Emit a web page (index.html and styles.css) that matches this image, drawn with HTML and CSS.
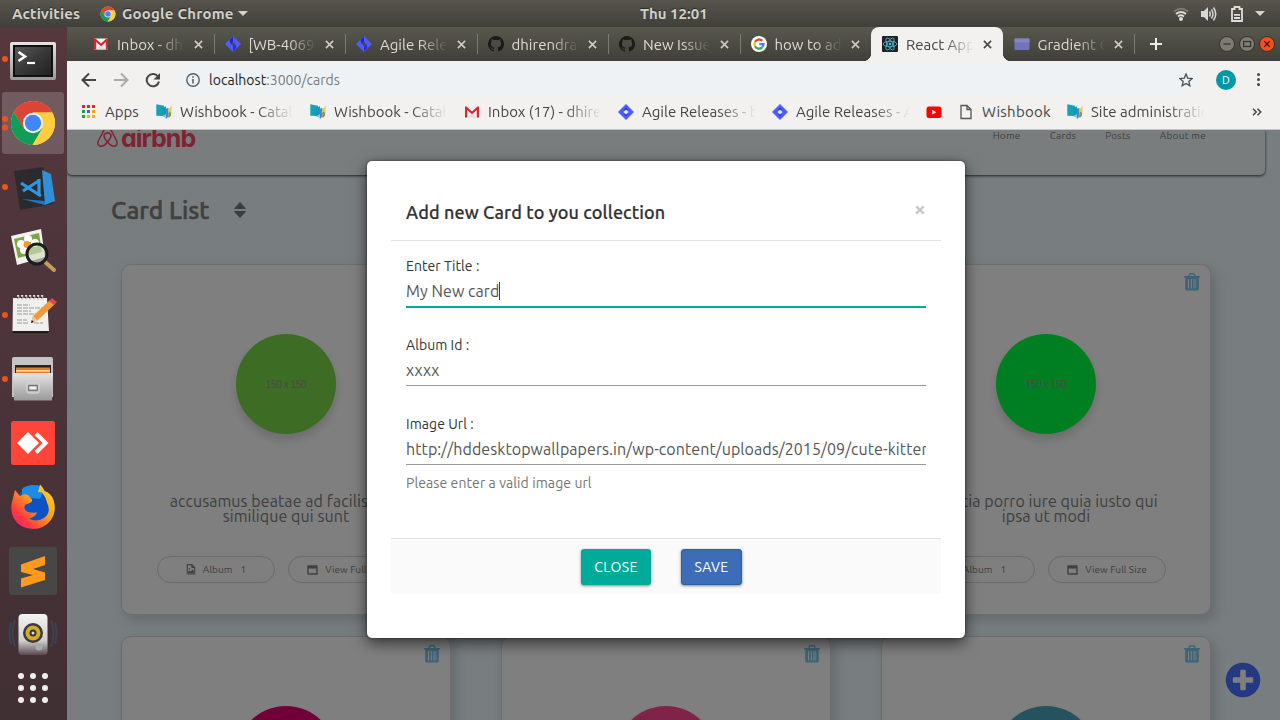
FILE: index.html
```html
<!DOCTYPE html>
<html lang="en">
<head>
<meta charset="utf-8">
<title>React App</title>
<link rel="stylesheet" href="styles.css">
</head>
<body>
<svg width="0" height="0" class="defs">
  <defs>
    <linearGradient id="gSteel" x1="0" y1="0" x2="0" y2="1"><stop offset="0" stop-color="#e4e4e4"/><stop offset="1" stop-color="#9a9a9a"/></linearGradient>
    <linearGradient id="gTerm" x1="0" y1="0" x2="1" y2="1"><stop offset="0" stop-color="#5a5a5a"/><stop offset=".5" stop-color="#383838"/><stop offset="1" stop-color="#222"/></linearGradient>
    <linearGradient id="gFox" x1="1" y1="0" x2="0" y2="1"><stop offset="0" stop-color="#ffe226"/><stop offset=".45" stop-color="#ff9a1e"/><stop offset=".75" stop-color="#ff3a3f"/><stop offset="1" stop-color="#e3178f"/></linearGradient>
    <linearGradient id="gSpk" x1="0" y1="0" x2="0" y2="1"><stop offset="0" stop-color="#f4f4f4"/><stop offset=".65" stop-color="#cfcfcf"/><stop offset="1" stop-color="#5c484e"/></linearGradient>
    <symbol id="chrome" viewBox="0 0 48 48">
      <circle cx="24" cy="24" r="22.5" fill="#ffcd40"/>
      <path d="M4.5 12.8A22.5 22.5 0 0 1 43.7 13.2L24 13.2 14.3 29.6Z" fill="#db4437"/>
      <path d="M4.5 12.8A22.5 22.5 0 0 0 23.5 46.5L33.6 29.4 24 34 14.4 29.4Z" fill="#0f9d58"/>
      <path d="M24 13.2H43.7A22.5 22.5 0 0 1 23.5 46.5L33.6 29.4Z" fill="#ffcd40"/>
      <circle cx="24" cy="24" r="10.4" fill="#f1f1f1"/><circle cx="24" cy="24" r="8.3" fill="#4285f4"/>
    </symbol>
    <symbol id="gmail" viewBox="0 0 16 16"><path d="M1 2.5h14v11H1z" fill="#f3f3f3"/><path d="M3.5 13.5 8 9l4.500 4.500z" fill="#ddd"/><path d="M1 13.500V2.500h1.500L8 7.500l5.500-5H15v11h-2.200V6L8 10.200 3.200 6v7.500z" fill="#d9262e"/></symbol>
    <symbol id="jira" viewBox="0 0 16 16"><path d="M8 0 16 8 8 16 0 8Z" fill="#4c5dff"/><path d="M8 3.800 9.800 5.500 8 8 6 6Z" fill="#2624c8"/><path d="M8 12.200 6.200 10.500 8 8l2 2z" fill="#2c2fd8"/><path d="M8 5.500 10.500 8 8 10.500 5.500 8Z" fill="#e9ebff"/></symbol>
    <symbol id="jiratab" viewBox="0 0 16 16"><path d="M8 0 16 8 8 16 0 8Z" fill="#4c5dff"/><path d="M8 .5v6L5.800 8.200 4.500 4Z" fill="#2624c8"/><path d="M8 15.500v-6l2.200-1.700L11.500 12Z" fill="#2c2fd8"/><path d="M8 5.800 10.200 8 8 10.200 5.800 8Z" fill="#4c4c46"/></symbol>
    <symbol id="github" viewBox="0 0 16 16"><path fill="#1b1b1b" d="M8 0a8 8 0 0 0-2.530 15.590c.4.070.55-.17.55-.38v-1.490c-2.230.49-2.690-.94-2.690-.94-.36-.92-.89-1.170-.89-1.170-.73-.5.050-.49.050-.49.800.06 1.230.83 1.230.83.720 1.220 1.870.87 2.330.66.070-.52.280-.87.510-1.070-1.780-.2-3.640-.89-3.640-3.950 0-.87.310-1.590.82-2.150-.080-.2-.36-1.020.080-2.120 0 0 .67-.21 2.200.82a7.500 7.500 0 0 1 4 0c1.530-1.040 2.200-.82 2.200-.82.440 1.100.16 1.920.080 2.120.510.560.820 1.270.820 2.150 0 3.070-1.870 3.750-3.650 3.950.29.250.540.730.540 1.480v2.190c0 .21.150.46.550.38A8 8 0 0 0 8 0z"/></symbol>
    <symbol id="wish" viewBox="0 0 16 16"><path d="M.3.300 8 1.800v10.200L.3 11.800Z" fill="#12a2ba"/><path d="M6 4 10 2.200v10.500L6 12Z" fill="#1798b4"/><path d="M6.500 12 10 10v4.500z" fill="#8fc7e2"/><path d="M10 4.500 12.500 4v8.500L10 15Z" fill="#3b8fd0"/><path d="M12.500 5.500 15.800 1.500 15.300 10 12.500 12Z" fill="#e8cf4a"/><path d="M12.500 9 14 7.500v5L12.500 14z" fill="#d75b42"/><path d="M13.500 9l1.500-1v4l-1.500 1z" fill="#69b35a"/></symbol>
    <symbol id="close" viewBox="0 0 10 10"><path d="M1 1 9 9M9 1 1 9" stroke="currentColor" stroke-width="1.700" fill="none"/></symbol>
    <symbol id="trash" viewBox="0 0 16 18"><path d="M0 3h4l1-2Q5.500 0 6.500 0h3q1 0 1.500 1l1 2h4v1.600h-1.200V16q0 1.600-1.500 1.600h-10.600Q1.200 17.600 1.200 16V4.600H0zM5.500 3h5l-.7-1.500H6.200zM4 6v9.500h1V6zm2.800 0v9.500h1V6zm2.700 0v9.500h1V6zm2 0v9.500h.7V6z" fill="currentColor" fill-rule="evenodd"/></symbol>
    <symbol id="imgfile" viewBox="0 0 10 12"><path d="M1 .7h5L9 3.700v7.200H1zM6 .7v3h3" fill="none" stroke="currentColor" stroke-width="1.200"/><path d="M2 10V8.200l1.300-1.200 1.200 1.200L6.700 6 8 7.200V10z" fill="currentColor"/><circle cx="3.400" cy="5.200" r=".9" fill="currentColor"/></symbol>
    <symbol id="win" viewBox="0 0 11 10"><path d="M1.200.3h8.600q.9 0 .9.900v7.600q0 .9-.9.900H1.200q-.9 0-.9-.9V1.200q0-.9.900-.9zM1.700 3.400v4.900h7.600V3.400z" fill="currentColor" fill-rule="evenodd"/></symbol>
  </defs>
</svg>

<header class="topbar">
  <div class="top-left"><span class="activities">Activities</span><svg class="i16"><use href="#chrome"/></svg><span class="appname">Google Chrome</span><i class="caret-down"></i></div>
  <div class="clock">Thu 12:01</div>
  <div class="tray">
    <svg width="16" height="16" viewBox="0 0 16 16" fill="none" stroke-linecap="butt"><path d="M1 5.500Q8 0 15 5.500" stroke="#7c7a73" stroke-width="1.800"/><path d="M3 8Q8 4 13 8" stroke="#ddd" stroke-width="1.800"/><path d="M5 10.500Q8 8 11 10.500" stroke="#ddd" stroke-width="1.800"/><circle cx="8" cy="13" r="2" fill="#ddd"/></svg>
    <svg width="16" height="16" viewBox="0 0 16 16" fill="none"><path d="M0 5h3l4-4v14l-4-4H0z" fill="#d8d8d8"/><path d="M8.500 5.500q1.500 2.500 0 5M10.500 3.500q3 4.500 0 9M12.500 1.500q4.500 6.500 0 13" stroke="#d8d8d8" stroke-width="1.500"/></svg>
    <svg width="12" height="16" viewBox="0 0 12 16"><path d="M1 3h2.500V1h5v2H11v12H1z" fill="none" stroke="#ddd" stroke-width="1.800"/><path d="M3 8h6v1.700H3zM3 11h6v2H3z" fill="#ddd"/></svg>
    <i class="caret-down"></i>
  </div>
</header>

<div class="desktop">
  <nav class="dock">
    <div class="dock-item run"><svg viewBox="0 0 67 64"><rect x="10" y="15" width="46" height="38" rx="2" fill="url(#gSteel)"/><rect x="13" y="18" width="40" height="32" fill="#111"/><rect x="15" y="20" width="36" height="28" fill="url(#gTerm)"/><path d="M18.500 25l6.500 4.500-6.500 4.500" stroke="#fff" stroke-width="2.600" fill="none"/><path d="M27 36h8" stroke="#fff" stroke-width="2.200"/></svg></div>
    <div class="dock-item active run2"><svg viewBox="0 0 67 64"><use href="#chrome" x="9.500" y="8.500" width="47" height="47"/></svg></div>
    <div class="dock-item run"><svg viewBox="0 0 67 64"><path d="M14 16 43 12 53 49 20 55Z" fill="#2b2b2e"/><path d="M42 15 51 19 55 46 45 50Z" fill="#2f8fd8"/><path d="M22 44 45 46 45 50 Z" fill="#1c78c4"/><path d="M40 25 23 36M21 28 41 41M39 24v17" stroke="#2f97e2" stroke-width="3.200" fill="none"/></svg></div>
    <div class="dock-item"><svg viewBox="0 0 67 64"><path d="M11 17 41 10 45 38 17 46Z" fill="#f2f2ee"/><path d="M14 20 39 14 42 33 18 39Z" fill="#7da741"/><g fill="#fff"><circle cx="28" cy="20" r="4"/><circle cx="21" cy="25" r="4"/><circle cx="35" cy="24" r="4"/><circle cx="24" cy="31" r="4"/></g><circle cx="27" cy="25.500" r="3.500" fill="#f0a020"/><path d="M45 43 54 51" stroke="#c59a5b" stroke-width="4" stroke-linecap="round"/><circle cx="37" cy="35" r="10" fill="#d3d8c5" fill-opacity=".65" stroke="#1c1c1c" stroke-width="3"/></svg></div>
    <div class="dock-item run"><svg viewBox="0 0 67 64"><g transform="translate(0 -2)"><path d="M13 17h34l2 33H12.500z" fill="#f0f0ee"/><path d="M12.500 50h36v2h-36z" fill="#1b1b1b"/><path d="M17 16.500h28" stroke="#ddd" stroke-width="5" stroke-dasharray="2.200 1.800"/><path d="M17 16.500h28" stroke="#333" stroke-width="1.500" stroke-dasharray="1.500 2.500"/><path d="M17 24h13M17 27h25M17 30h14M17 33h20M17 39h10M17 42h11M34 42h9" stroke="#999" stroke-width="1.200" stroke-dasharray="5 1"/><path d="M31 42 33 35 50 19 55 23 38 39Z" fill="#f29a37"/><path d="M31 42 33 35 37.500 39.500Z" fill="#e8c9a0"/><path d="M31 42l.8-3 2 2z" fill="#111"/><path d="M49 20 52 17 57 21 54 24Z" fill="#e24848"/></g></svg></div>
    <div class="dock-item run"><svg viewBox="0 0 67 64"><path d="M12 12q0-2 2-2h37q2 0 2 2v38H12z" fill="#c4c4c4"/><path d="M15 18h36v9H15z" fill="#2b211c"/><path d="M16 20.500h34v6H16z" fill="#de7a2a"/><path d="M16 23h34v1.800H16z" fill="#f9cf95"/><path d="M13 26h40l-1 27.500H14z" fill="url(#gSteel)"/><rect x="27" y="36" width="12" height="10" rx="1.500" fill="#bbb" stroke="#ddd"/><rect x="28.700" y="38.700" width="8.500" height="4.500" fill="#eee" stroke="#555"/></svg></div>
    <div class="dock-item"><svg viewBox="0 0 67 64"><rect x="11" y="10" width="44" height="44" rx="2.500" fill="#ff4438"/><path d="M28 21 39 32 28 43 17 32Z" fill="#fff"/><path d="M36 22.500 45.500 32 36 41.500" stroke="#fff" stroke-width="4.200" fill="none"/></svg></div>
    <div class="dock-item"><svg viewBox="0 0 67 64"><circle cx="34" cy="30" r="18.500" fill="#0a52c6"/><path d="M22 14q4-4 12-4 7 0 10 5l-4 9-18-2z" fill="#1e8be8"/><path d="M38 17 40 9.500Q43 12 44.500 16 51 18 53.500 25 57 36 51 45 44 54 33 54 20 54 13.500 43 9.500 34 12.500 25l2.500-10 5 6q4-3 8-1l3 3.500 1 .5q1 4-5 5l-2 1q-2 5 3 7 4 1 9 .5-2 5-8 6 7 4 14 0 9-5 4-16-1-5-5-10z" fill="url(#gFox)"/></svg></div>
    <div class="dock-item"><svg viewBox="0 0 67 64"><rect x="9" y="8" width="48" height="48" rx="2.500" fill="#474747"/><path d="M21 25.500 45 17v9L33 30 45 33.500V41L21 48.500v-9L33 36 21 33Z" fill="#ff9a1f"/></svg></div>
    <div class="dock-item"><svg viewBox="0 0 67 64"><path d="M15 17q-5 13 0 27M11 20q-3 10 0 21M51 17q5 13 0 27M55 20q3 10 0 21" stroke="#3b4a62" stroke-width="2" fill="none" opacity=".7"/><path d="M18.500 15q0-4 4-4h21q4 0 4 4v33q0 4-4 4h-21q-4 0-4-4z" fill="url(#gSpk)"/><circle cx="33" cy="30" r="10" fill="#3a3a3a"/><circle cx="33" cy="30" r="7.500" fill="#d1ac2a"/><circle cx="33" cy="30" r="3.500" fill="#333"/><circle cx="33" cy="30" r="1.500" fill="#ddd"/><circle cx="39" cy="44" r="3.500" fill="#aaa"/></svg></div>
    <div class="dock-apps"><i></i><i></i><i></i><i></i><i></i><i></i><i></i><i></i><i></i></div>
  </nav>

  <section class="browser">
    <div class="tabs">
      <div class="tab"><svg class="i16"><use href="#gmail"/></svg><span>Inbox - dhirendra</span><svg class="x"><use href="#close"/></svg></div>
      <div class="tab"><svg class="i16"><use href="#jiratab"/></svg><span>[WB-4069] Bug</span><svg class="x"><use href="#close"/></svg></div>
      <div class="tab"><svg class="i16"><use href="#jiratab"/></svg><span>Agile Releases</span><svg class="x"><use href="#close"/></svg></div>
      <div class="tab"><svg class="i16"><use href="#github"/></svg><span>dhirendrakumar</span><svg class="x"><use href="#close"/></svg></div>
      <div class="tab"><svg class="i16"><use href="#github"/></svg><span>New Issue page</span><svg class="x"><use href="#close"/></svg></div>
      <div class="tab nosep"><svg class="i16" viewBox="0 0 16 16"><circle cx="8" cy="8" r="8" fill="#fff"/><g fill="none" stroke-width="2.300"><path d="M11.300 4.900A4.600 4.600 0 0 0 4 5.800" stroke="#ea4335"/><path d="M4 5.800a4.600 4.600 0 0 0 0 4.400" stroke="#fbbc05"/><path d="M4 10.200a4.600 4.600 0 0 0 7 1.300" stroke="#34a853"/><path d="M11 11.500A4.600 4.600 0 0 0 12.500 8.100H8.200" stroke="#4285f4"/></g></svg><span>how to add code</span><svg class="x"><use href="#close"/></svg></div>
      <div class="tab current"><svg class="i16" viewBox="0 0 16 16"><rect width="16" height="16" rx="1" fill="#222"/><g fill="none" stroke="#53c1de" stroke-width=".8"><ellipse cx="8" cy="8" rx="6.800" ry="2.700"/><ellipse cx="8" cy="8" rx="6.800" ry="2.700" transform="rotate(60 8 8)"/><ellipse cx="8" cy="8" rx="6.800" ry="2.700" transform="rotate(120 8 8)"/></g><circle cx="8" cy="8" r="1.300" fill="#53c1de"/></svg><span>React App</span><svg class="x"><use href="#close"/></svg></div>
      <div class="tab"><svg class="i16" viewBox="0 0 16 16"><rect x=".5" y="2.500" width="15" height="11.500" rx="1" fill="#7175b8"/><rect x=".5" y="2.500" width="15" height="4" rx="1" fill="#8185c4"/></svg><span>Gradient Color</span><svg class="x"><use href="#close"/></svg></div>
      <svg class="plus" viewBox="0 0 12 12"><path d="M6 0v12M0 6h12" stroke="#eeeee6" stroke-width="2"/></svg>
      <div class="winbtns">
        <svg viewBox="0 0 16 16"><circle cx="8" cy="8" r="7.500" fill="#7d7b73" stroke="#33322e"/><path d="M4.500 8h7" stroke="#33322e" stroke-width="1.300"/></svg>
        <svg viewBox="0 0 16 16"><circle cx="8" cy="8" r="7.500" fill="#7d7b73" stroke="#33322e"/><rect x="4.600" y="5.500" width="7" height="5" fill="none" stroke="#33322e" stroke-width="1.200"/></svg>
        <svg viewBox="0 0 16 16"><circle cx="8" cy="8" r="7.500" fill="#f0521f" stroke="#4a2a1c"/><path d="M5.300 5.300l5.400 5.400M10.700 5.300l-5.400 5.400" stroke="#4d1a0c" stroke-width="1.300"/></svg>
      </div>
    </div>

    <div class="toolbar">
      <svg class="nav" viewBox="0 0 16 16"><path d="M15 8H2M8 1.500 1.500 8 8 14.500" fill="none" stroke="#444" stroke-width="2"/></svg>
      <svg class="nav" viewBox="0 0 16 16"><path d="M1 8h13M8 1.500 14.500 8 8 14.500" fill="none" stroke="#aaa" stroke-width="2"/></svg>
      <svg class="nav" viewBox="0 0 16 16"><path d="M13 4.500A6.200 6.200 0 1 0 14 9.500" fill="none" stroke="#444" stroke-width="2"/><path d="M15 1v6.500H8.500z" fill="#444"/></svg>
      <div class="omnibox">
        <svg width="14" height="14" viewBox="0 0 14 14"><circle cx="7" cy="7" r="6.200" fill="none" stroke="#5b5f63" stroke-width="1.400"/><path d="M6.200 6h1.600v4.500H6.200zM6.200 3.300h1.600v1.500H6.200z" fill="#5b5f63"/></svg>
        <span class="url"><b>localhost</b>:3000/cards</span>
        <svg class="star" viewBox="0 0 14 14"><path d="M7 1 8.700 5.100 13.200 5.500 9.800 8.400 10.800 12.800 7 10.400 3.200 12.800 4.200 8.400.8 5.500 5.300 5.100Z" fill="none" stroke="#4c4f52" stroke-width="1.300"/></svg>
      </div>
      <div class="avatar">D</div>
      <div class="dots"><i></i><i></i><i></i></div>
    </div>

    <div class="bookmarks">
      <div class="bm apps"><svg width="13" height="13" viewBox="0 0 13 13"><path d="M0 0h3v3H0zM5 0h3v3H5z" fill="#f01c44"/><path d="M10 0h3v3h-3z" fill="#e8281c"/><path d="M0 5h3v3H0z" fill="#1aa04c"/><path d="M5 5h3v3H5z" fill="#2d6cf0"/><path d="M10 5h3v3h-3z" fill="#f5a800"/><path d="M0 10h3v3H0z" fill="#1aa04c"/><path d="M5 10h3v3H5zM10 10h3v3h-3z" fill="#f5b000"/></svg><span>Apps</span></div>
      <div class="bm wide"><svg class="i16"><use href="#wish"/></svg><span>Wishbook - Catalog</span></div>
      <div class="bm wide"><svg class="i16"><use href="#wish"/></svg><span>Wishbook - Catalog</span></div>
      <div class="bm wide"><svg class="i16"><use href="#gmail"/></svg><span>Inbox (17) - dhirendra</span></div>
      <div class="bm wide"><svg class="i16"><use href="#jira"/></svg><span>Agile Releases - board</span></div>
      <div class="bm wide"><svg class="i16"><use href="#jira"/></svg><span>Agile Releases - Agile</span></div>
      <div class="bm yt"><svg class="i16" viewBox="0 0 16 16"><rect x=".5" y="2.500" width="15" height="11.500" rx="2.500" fill="#f00"/><path d="M6.300 5.800 10.300 8.200 6.300 10.600z" fill="#fff"/></svg></div>
      <div class="bm file"><svg width="12" height="16" viewBox="0 0 12 16"><path d="M1 1.500h6L11 5.500V14.500H1zM7 1.500v4h4" fill="none" stroke="#555" stroke-width="1.300"/></svg><span>Wishbook</span></div>
      <div class="bm wide"><svg class="i16"><use href="#wish"/></svg><span>Site administration</span></div>
      <svg class="more" viewBox="0 0 10 8"><path d="M1 .8 4.200 4 1 7.200M5.500.8 8.700 4 5.500 7.200" fill="none" stroke="#444" stroke-width="1.500"/></svg>
    </div>

    <main class="viewport">
      <div class="page">
        <div class="site-nav">
          <div class="logo"><svg width="21" height="22" viewBox="0 0 21 22"><path d="M10.500 16C7 12 6.500 9.500 7.500 8.200 9 6.600 12 6.600 13.500 8.200 14.500 9.500 14 12 10.500 16 8 19 5 21 2.800 20 0 18.600.8 16 1.800 14L7.500 3Q9 .8 10.500.8T13.500 3L19.200 14C20.200 16 21 18.600 18.200 20 16 21 13 19 10.500 16Z" fill="none" stroke="#fe4660" stroke-width="1.500"/></svg><span>airbnb</span></div>
          <div class="links"><a>Home</a><a>Cards</a><a>Posts</a><a>About me</a></div>
        </div>
        <div class="list-head"><h1>Card List</h1><svg width="12" height="16" viewBox="0 0 12 16"><path d="M6 .5 11.500 6.500H.5zM6 15.500 .5 9.500h11z" fill="#787878" stroke="#787878" stroke-linejoin="round"/></svg></div>
        <div class="grid">
          <article class="card"><svg class="trash"><use href="#trash"/></svg><div class="pic green">150 x 150</div><p>accusamus beatae ad facilis cum<br>similique qui sunt</p><div class="actions"><span><svg width="10" height="11"><use href="#imgfile"/></svg>Album<em>1</em></span><span><svg width="11" height="10"><use href="#win"/></svg>View Full Size</span></div></article>
          <article class="card"><svg class="trash"><use href="#trash"/></svg><div class="pic pink"></div></article>
          <article class="card"><svg class="trash"><use href="#trash"/></svg><div class="pic lime">150 x 150</div><p>officia porro iure quia iusto qui<br>ipsa ut modi</p><div class="actions"><span><svg width="10" height="11"><use href="#imgfile"/></svg>Album<em>1</em></span><span><svg width="11" height="10"><use href="#win"/></svg>View Full Size</span></div></article>
          <article class="card"><svg class="trash"><use href="#trash"/></svg><div class="pic magenta"></div></article>
          <article class="card"><svg class="trash"><use href="#trash"/></svg><div class="pic pink"></div></article>
          <article class="card"><svg class="trash"><use href="#trash"/></svg><div class="pic teal"></div></article>
        </div>
        <svg class="fab" viewBox="0 0 36 36"><circle cx="18" cy="18" r="17.300" fill="#4872ff"/><path d="M15.200 9q0-1.200 1.200-1.200h3.200q1.200 0 1.200 1.200v6.200H27q1.200 0 1.200 1.200v3.200q0 1.200-1.200 1.200h-6.200V27q0 1.200-1.200 1.200h-3.200q-1.200 0-1.200-1.200v-6.200H9q-1.200 0-1.200-1.200v-3.200q0-1.200 1.200-1.200h6.200z" fill="#fff"/></svg>
      </div>
      <div class="backdrop">
        <div class="modal">
          <div class="modal-head"><h2>Add new Card to you collection</h2><svg class="dismiss" viewBox="0 0 10 10"><path d="M1.300 1.300 8.700 8.700M8.700 1.300 1.300 8.700" stroke="#c9c9c9" stroke-width="2.600"/></svg></div>
          <div class="field focus"><label>Enter Title :</label><div class="value">My New card<i class="cursor"></i></div></div>
          <div class="field"><label>Album Id :</label><div class="value">xxxx</div></div>
          <div class="field"><label>Image Url :</label><div class="value">http://hddesktopwallpapers.in/wp-content/uploads/2015/09/cute-kittens</div><small>Please enter a valid image url</small></div>
          <div class="modal-foot"><button class="btn close-btn">CLOSE</button><button class="btn save-btn">SAVE</button></div>
        </div>
      </div>
    </main>
  </section>
</div>
</body>
</html>
```

FILE: styles.css
```css
* { box-sizing: border-box; }
body { margin: 0; width: 1280px; height: 720px; overflow: hidden; display: flex; flex-direction: column; font-family: Ubuntu, "Noto Sans", "Open Sans", sans-serif; font-size: 15px; color: #444; }
svg { display: block; flex: none; }
.defs { position: absolute; }
.i16 { width: 16px; height: 16px; }

.topbar { height: 27px; flex: none; display: grid; grid-template-columns: 628px auto 1fr; align-items: center; padding: 0 15px 0 12px; background: linear-gradient(#58554c, #403f3a); color: #d2d0ca; font-weight: 600; font-size: 15px; text-shadow: 0 -1px 1px #2a2925; }
.top-left { display: flex; align-items: center; }
.activities { width: 88px; letter-spacing: .15px; }
.appname { margin-left: 6px; width: 116px; letter-spacing: .2px; }
.caret-down { width: 0; height: 0; border: 5px solid transparent; border-top-color: #d6d4ce; border-bottom: 0; }
.tray { display: flex; align-items: center; justify-content: flex-end; }
.tray svg:nth-child(2) { margin: 0 14px 0 12px; }
.tray .caret-down { margin-left: 12px; }

.desktop { flex: 1; display: flex; min-height: 0; }
.dock { width: 67px; flex: none; background: linear-gradient(#54383d, #4b343a 50%, #402f33); }
.dock-item { height: 64px; position: relative; }
.dock-item svg { width: 67px; height: 64px; position: relative; }
.dock-item.active::after { content: ""; position: absolute; left: 2px; top: 1px; width: 62px; height: 62px; border-radius: 3px; background: rgba(255,255,255,.18); }
.dock-item.active svg { z-index: 1; }
.run::before, .run2::before { content: ""; position: absolute; z-index: 2; left: 2px; top: 29px; width: 6px; height: 6px; border-radius: 3px; background: #e95420; }
.run2::before { top: 25px; box-shadow: 0 8.500px 0 #e95420; }
.dock-apps { display: grid; grid-template-columns: repeat(3, 6px); gap: 6px; padding: 6px 0 0 18px; }
.dock-apps i { width: 6px; height: 6px; border-radius: 3px; background: #eee; }

.browser { flex: 1; min-width: 0; display: flex; flex-direction: column; }
.tabs { height: 34px; display: flex; align-items: center; padding-left: 15px; background: linear-gradient(#59584e, #403f39); color: #dedcd2; }
.tab { width: 131.500px; height: 34px; flex: none; display: flex; align-items: center; padding-left: 11px; position: relative; }
.tab::after { content: ""; position: absolute; right: -1px; top: 7px; width: 1px; height: 20px; background: #7c7b72; }
.tab.nosep::after, .tab.current::after { display: none; }
.tab span { width: 70px; margin-left: 8px; font-size: 15px; white-space: nowrap; overflow: hidden; -webkit-mask-image: linear-gradient(90deg, #000 56%, transparent 96%); mask-image: linear-gradient(90deg, #000 56%, transparent 96%); }
.tab .x { width: 9px; height: 9px; margin-left: 6.500px; color: #cfcdc5; }
.tab.current { background: #f2f1f0; color: #444; border-radius: 8px 8px 0 0; }
.tab.current::before { content: ""; position: absolute; left: -8px; right: -8px; bottom: 0; height: 8px; background: radial-gradient(circle at 0 0, transparent 8px, #f2f1f0 8.500px) left / 8px 8px no-repeat, radial-gradient(circle at 100% 0, transparent 8px, #f2f1f0 8.500px) right / 8px 8px no-repeat; }
.tab.current .x { color: #444; }
.plus { width: 12px; height: 12px; margin-left: 16px; }
.winbtns { display: flex; gap: 4px; margin-left: auto; padding-right: 5px; }
.winbtns svg { width: 16px; height: 16px; }

.toolbar { height: 37px; flex: none; display: flex; align-items: center; padding-left: 14px; background: #f2f1f0; }
.nav { width: 16px; height: 16px; margin-right: 16px; }
.omnibox { width: 1025px; height: 28px; border-radius: 14px; background: #eef2f4; display: flex; align-items: center; padding-left: 9px; }
.url { margin-left: 9px; font-size: 14px; letter-spacing: .03px; color: #777c80; }
.url b { font-weight: 400; color: #222; }
.star { width: 14px; height: 14px; margin-left: auto; margin-right: 9px; }
.avatar { width: 20px; height: 20px; margin-left: 14px; border-radius: 50%; background: #0097a7; color: #fff; font-size: 11px; line-height: 20px; text-align: center; }
.dots { margin-left: 21px; display: grid; gap: 2px; }
.dots i { width: 3px; height: 3px; border-radius: 50%; background: #444; }

.bookmarks { height: 32px; flex: none; display: flex; align-items: center; padding: 0 0 4px 15px; background: #f2f1f0; border-bottom: 1px solid #c6c5c4; }
.bm { display: flex; align-items: center; flex: none; font-size: 15px; }
.bm span { margin-left: 8px; white-space: nowrap; overflow: hidden; }
.apps { width: 74px; }
.apps span { margin-left: 10px; }
.wide { width: 154px; }
.wide span { width: 116px; -webkit-mask-image: linear-gradient(90deg, #000 66%, transparent 98%); mask-image: linear-gradient(90deg, #000 66%, transparent 98%); }
.yt { width: 34px; }
.file { width: 107px; }
.bm.file span { margin-left: 10px; letter-spacing: .25px; }
.more { width: 10px; height: 8px; margin-left: 31px; }

.viewport { flex: 1; position: relative; overflow: hidden; background: #f0fafe; }
.site-nav { width: 1198px; height: 45px; padding: 0 59px 0 30px; display: flex; justify-content: space-between; align-items: flex-start; border-radius: 0 0 5px 5px; background: #f2fafd; box-shadow: 0 1px 3px rgba(0,0,0,.75); }
.logo { display: flex; height: 18px; align-items: flex-end; gap: 3px; color: #fe4660; }
.logo span { font: 700 25px/17px Inter, sans-serif; height: 18px; letter-spacing: -1px; font-feature-settings: "cv11"; }
.links { display: flex; font-size: 10px; line-height: 12px; color: #808080; }
.links a { margin-left: 29px; letter-spacing: .25px; }
.list-head { display: flex; align-items: center; gap: 25px; height: 36px; margin: 17px 0 0 44px; }
.list-head h1 { margin: 0; font-size: 24.500px; font-weight: 500; line-height: 36px; color: #808080; -webkit-text-stroke: .5px #808080; }
.grid { display: grid; grid-template-columns: repeat(3, 330px); grid-auto-rows: 351px; column-gap: 50px; row-gap: 21px; margin: 36px 0 0 54px; }
.card { position: relative; border: 1px solid #dcdcdc; border-radius: 10px; background: #fff; box-shadow: 4px 5px 12px rgba(80,95,110,.25); padding-top: 69px; text-align: center; color: #808080; }
.trash { position: absolute; left: 302px; top: 8px; width: 16px; height: 18px; color: #78c8ec; }
.pic { width: 100px; height: 100px; margin: 0 auto; border-radius: 50%; box-shadow: 0 6px 10px rgba(0,0,0,.15); font: 10px/102px "Liberation Sans", Arial, sans-serif; letter-spacing: -.4px; color: #9a8f9a; }
.green { background: #7ad848; }
.lime { background: #00ff45; }
.magenta { background: #e0006e; }
.pink { background: #fe4690; }
.teal { background: #4aa4be; }
.card p { margin: 60px 0 0; font-size: 16px; line-height: 15px; letter-spacing: .08px; white-space: nowrap; }
.actions { display: flex; gap: 13px; margin: 32px 0 0 35px; }
.actions span { width: 118px; height: 27px; display: flex; align-items: center; justify-content: center; border: 1px solid #d6d6d6; border-radius: 14px; font-size: 10px; letter-spacing: .06px; }
.actions svg { margin-right: 7px; }
.actions em { font-style: normal; margin-left: 8px; }
.fab { position: absolute; left: 1158px; top: 532px; width: 36px; height: 36px; }

.backdrop { position: absolute; inset: 0; background: rgba(0,0,0,.5); }
.modal { position: absolute; left: 300px; top: 31px; width: 598px; height: 477px; padding: 24px; background: #fff; border-radius: 5px; box-shadow: 0 5px 15px rgba(0,0,0,.6), 0 0 3px rgba(0,0,0,.5); color: #333; }
.modal-head { height: 56px; padding: 12px 16px 0 15px; display: flex; justify-content: space-between; border-bottom: 1px solid #e3e3e3; }
.modal-head h2 { margin: 0; font-size: 18px; line-height: 30px; font-weight: 500; letter-spacing: .11px; -webkit-text-stroke: .2px #333; }
.dismiss { width: 10px; height: 10px; margin-top: 8px; }
.field { height: 79px; margin: 0 15px; padding-top: 14px; }
.field label { display: block; font-size: 14px; line-height: 22px; letter-spacing: .06px; }
.value { display: flex; align-items: center; height: 30px; padding-bottom: 1px; border-bottom: 1px solid #999; color: #555; font-size: 16px; white-space: nowrap; overflow: hidden; letter-spacing: .07px; }
.focus .value { height: 31px; padding-bottom: 2px; border-bottom: 2px solid #00ab99; }
.cursor { width: 1px; height: 18px; background: #444; }
.field small { display: block; margin-top: 7px; font-size: 14px; line-height: 22px; color: #757575; letter-spacing: .09px; }
.modal-foot { height: 56px; margin-top: 60px; display: flex; justify-content: center; align-items: flex-start; gap: 30px; padding: 10px 9px 0 0; border-top: 1px solid #e3e3e3; background: #fafafa; }
.btn { height: 36px; padding: 0; border: 0; border-radius: 3px; color: #fff; font: inherit; font-size: 14px; letter-spacing: .4px; box-shadow: 0 1px 3px rgba(0,0,0,.45); }
.close-btn { width: 70px; background: #00ab99; }
.save-btn { width: 61px; background: #3d6db8; border: 1px solid #335da3; }
```
